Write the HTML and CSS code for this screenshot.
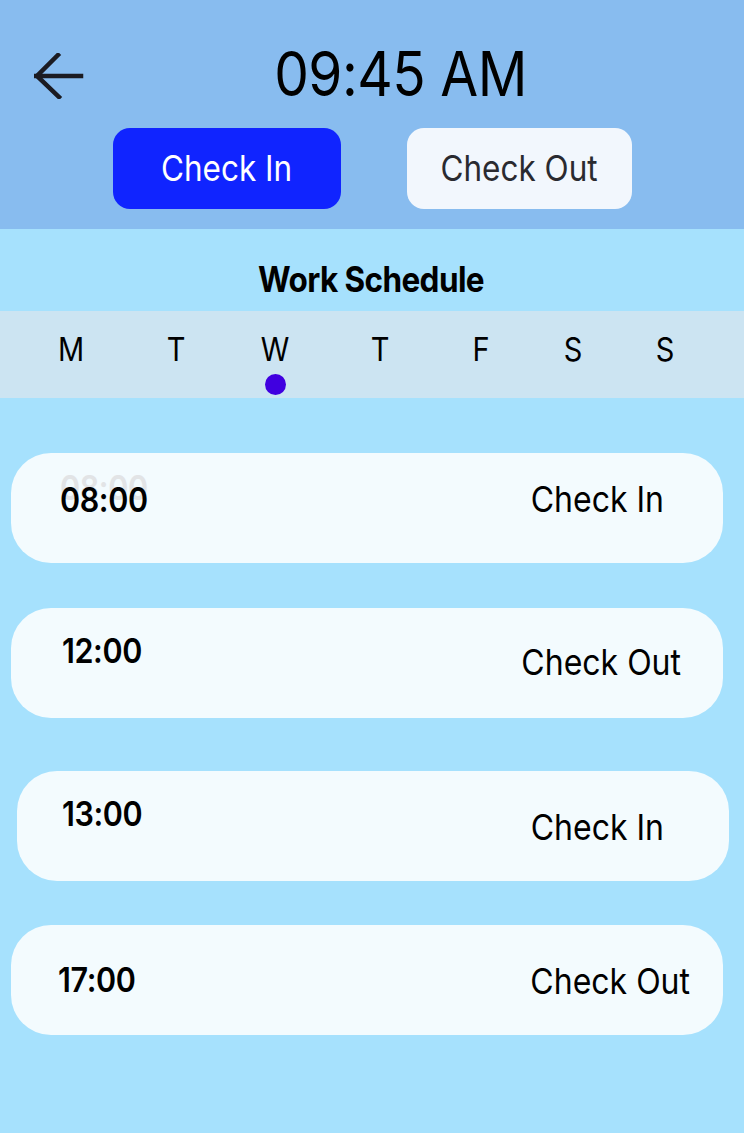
FILE: index.html
```html
<!DOCTYPE html>
<html lang="en">
<head>
<meta charset="utf-8">
<title>Work Schedule</title>
<link rel="stylesheet" href="styles.css">
</head>
<body>
<div class="app">
  <header class="header">
    <div class="top-row">
      <button class="back" aria-label="Back">
        <svg width="50" height="46" viewBox="0 0 50 46" fill="none" stroke="#1b1b22" stroke-width="4.5" stroke-linecap="square" stroke-linejoin="miter">
          <path d="M2 23 H47"/>
          <path d="M24 2 L3 23 L25 44"/>
        </svg>
      </button>
      <div class="clock"><span class="tall">09:45 AM</span></div>
    </div>
    <div class="actions">
      <button class="btn btn-primary"><span class="tall">Check In</span></button>
      <button class="btn btn-light"><span class="tall">Check Out</span></button>
    </div>
  </header>

  <main class="content">
    <h1 class="section-title"><span class="tall">Work Schedule</span></h1>
    <div class="week">
      <div class="day"><span class="tall">M</span></div>
      <div class="day"><span class="tall">T</span></div>
      <div class="day day-active"><span class="tall">W</span><span class="dot"></span></div>
      <div class="day"><span class="tall">T</span></div>
      <div class="day"><span class="tall">F</span></div>
      <div class="day"><span class="tall">S</span></div>
      <div class="day"><span class="tall">S</span></div>
    </div>

    <div class="cards">
      <div class="card card-1">
        <div class="time"><span class="ghost">08:00</span><span class="tall">08:00</span></div>
        <div class="action"><span class="tall">Check In</span></div>
      </div>
      <div class="card card-2">
        <div class="time time-high"><span class="tall">12:00</span></div>
        <div class="action"><span class="tall">Check Out</span></div>
      </div>
      <div class="card card-3">
        <div class="time time-high"><span class="tall">13:00</span></div>
        <div class="action action-low"><span class="tall">Check In</span></div>
      </div>
      <div class="card card-4">
        <div class="time"><span class="tall">17:00</span></div>
        <div class="action action-low"><span class="tall">Check Out</span></div>
      </div>
    </div>
  </main>
</div>
</body>
</html>
```

FILE: styles.css
```css
* { box-sizing: border-box; }

html, body {
  margin: 0;
  padding: 0;
}

body {
  font-family: Inter, "Noto Sans", sans-serif;
  color: #000;
  background: #a6e1fd;
}

.app {
  width: 744px;
  min-height: 1133px;
  background: #a6e1fd;
}

.tall {
  display: inline-block;
  transform: scaleY(1.12);
}

/* Header */
.header {
  background: #88bcef;
  height: 229px;
  padding-top: 46px;
}

.top-row {
  display: flex;
  align-items: center;
  padding: 0 28px 0 33px;
  height: 56px;
}

.back {
  width: 52px;
  height: 56px;
  padding: 0;
  border: none;
  background: none;
  display: flex;
  align-items: center;
  justify-content: center;
  margin-top: 4px;
}

.clock {
  flex: 1;
  text-align: center;
  font-size: 55px;
  font-weight: 400;
  line-height: 56px;
  letter-spacing: -0.5px;
}

.actions {
  display: flex;
  justify-content: center;
  gap: 66px;
  margin-top: 26px;
}

.btn {
  height: 81px;
  border: none;
  border-radius: 17px;
  font-family: inherit;
  font-size: 31.5px;
  font-weight: 400;
  padding: 0;
}

.btn-primary {
  width: 228px;
  background: #1024ff;
  color: #fff;
}

.btn-light {
  width: 225px;
  background: #f2f7fd;
  color: #2a2a30;
}

/* Content */
.section-title {
  margin: 0;
  height: 82px;
  display: flex;
  align-items: center;
  justify-content: center;
  font-size: 31.5px;
  font-weight: 700;
  letter-spacing: -0.6px;
  padding-top: 18px;
  padding-right: 2px;
}

.week {
  background: #cce4f2;
  height: 87px;
  display: grid;
  grid-template-columns: 104px 106px 92px 118px 84px 100px 84px;
  padding-left: 19px;
}

.day {
  display: flex;
  flex-direction: column;
  align-items: center;
  padding-top: 22px;
  font-size: 29px;
  line-height: 34px;
}

.dot {
  width: 21px;
  height: 21px;
  border-radius: 50%;
  background: #4000e0;
  margin-top: 7px;
}

/* Cards */
.cards {
  display: flex;
  flex-direction: column;
  gap: 45px;
  padding-top: 55px;
}

.card {
  position: relative;
  width: 712px;
  height: 110px;
  margin-left: 11px;
  background: #f3fbfe;
  border-radius: 40px;
  display: flex;
  align-items: center;
  justify-content: space-between;
}

.card-1 { padding: 0 59px 16px 49px; }
.card-2 { padding: 0 42px 0 51px; }
.card-3 { margin-left: 17px; margin-top: 8px; padding: 0 65px 0 45px; }
.card-4 { margin-top: -1px; padding: 0 33px 0 47px; }

.time {
  position: relative;
  font-size: 30.5px;
  font-weight: 600;
  line-height: 34px;
  letter-spacing: -0.4px;
}

.time-high {
  align-self: flex-start;
  margin-top: 26px;
}

.ghost {
  position: absolute;
  left: 0;
  top: -12px;
  color: #e2e4e6;
  transform: scaleY(1.12);
}

.time .tall { position: relative; }

.action {
  font-size: 32px;
  font-weight: 400;
  line-height: 34px;
}

.action-low { margin-top: 4px; }
```
